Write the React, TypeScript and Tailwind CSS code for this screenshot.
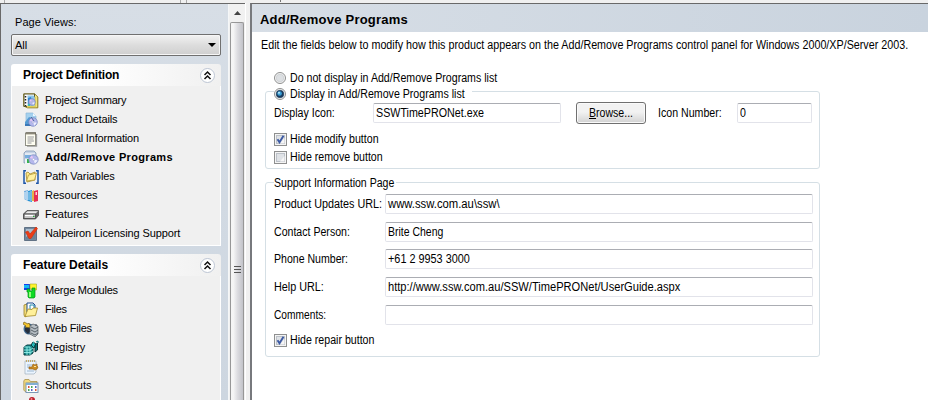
import React from "react";

const UI = "font-['Liberation_Sans',Arial,sans-serif]";

type IconProps = { children: React.ReactNode };
const Icon = ({ children }: IconProps) => (
  <svg width="16" height="16" viewBox="0 0 16 16" className="shrink-0">
    {children}
  </svg>
);

const Disc = ({ x, y, r = 4 }: { x: number; y: number; r?: number }) => (
  <g>
    <circle cx={x} cy={y} r={r} fill="#b5b8ec" stroke="#7484bd" strokeWidth="0.7" />
    <path d={`M${x} ${y}L${x - r * 0.8} ${y - r * 0.4}L${x - r * 0.3} ${y - r * 0.9}Z`} fill="#e6c6f5" />
    <path d={`M${x} ${y}L${x + r * 0.9} ${y + r * 0.2}L${x + r * 0.3} ${y + r * 0.9}Z`} fill="#edf0ff" />
    <circle cx={x} cy={y} r={r * 0.25} fill="#fff" stroke="#8a8ec8" strokeWidth="0.5" />
  </g>
);

const icons = {
  summary: (
    <Icon>
      <path d="M.8 1h11l3 3v10.800H4.500L.8 13z" fill="#f5e98e" stroke="#8c7a1c" />
      <rect x="1" y="1" width="10.500" height="12.500" fill="#fff" stroke="#5e5a28" />
      <path d="M2.500 3v10" stroke="#222" strokeWidth="1.500" strokeDasharray="1.500 1.500" />
      <path d="M4.500 2.500h6l1.500 2v8.500H4.500z" fill="#8cc4e8" />
      <path d="M5 5l3-1 1 5-4 2z" fill="#2a83d2" />
      <path d="M12.500 4v9.500H4" fill="none" stroke="#e3d15c" strokeWidth="1.500" />
      <Disc x={9} y={9} r={3.300} />
      <path d="M5 11h2v2H5z" fill="#3bb8b6" />
    </Icon>
  ),
  product: (
    <Icon>
      <path d="M3 1h7l3 3v9H3z" fill="#a5d1ee" stroke="#8eb8d8" strokeWidth=".7" />
      <path d="M10 1v3h3z" fill="#eff8ff" />
      <path d="M2 10l4-5 3 1-3 7H2z" fill="#559bd3" />
      <path d="M2 12h7v2H2z" fill="#3c78b7" />
      <Disc x={10} y={10} r={4.300} />
      <path d="M8 5l3 4" stroke="#48639a" />
    </Icon>
  ),
  general: (
    <Icon>
      <path d="M4 15h9.500V3" fill="none" stroke="#9b9b9b" strokeWidth="1.300" />
      <rect x="2.500" y="2" width="10" height="12.500" fill="#fffef2" stroke="#77776a" strokeWidth=".8" />
      <path d="M3.500 2.200h9" stroke="#4b4534" strokeWidth="2.500" strokeDasharray="1 1" />
      <path d="M4.500 6h6.500M4.500 8h6M4.500 10h6.500M4.500 12h4" stroke="#7b7d87" strokeWidth=".8" />
    </Icon>
  ),
  addremove: (
    <Icon>
      <path d="M1 3l2-2h8l2 2v10H1z" fill="#c7d4e5" stroke="#8499b5" strokeWidth=".8" />
      <path d="M2 4h10" stroke="#fff" />
      <rect x="2" y="5" width="6" height="3" fill="#76aee0" />
      <path d="M2 9h5v5H2z" fill="#eff4f7" />
      <rect x="4" y="9" width="2.500" height="4" fill="#35b34a" />
      <Disc x={10.500} y={9.500} r={4.700} />
    </Icon>
  ),
  path: (
    <Icon>
      <path d="M3 1.800H1v12.400h2M13 1.800h2v12.400h-2" fill="none" stroke="#1d55a8" strokeWidth="1.500" />
      <path d="M3 4l2-1 2 2 5-2v8l-8 2z" fill="#ffe98a" stroke="#a68b2d" strokeWidth=".8" />
      <path d="M3.500 12l2-6 8-2-2 7z" fill="#fff0a0" stroke="#b59838" strokeWidth=".8" />
    </Icon>
  ),
  resources: (
    <Icon>
      <path d="M1 3l4-1v11l-4-2z" fill="#77aede" />
      <path d="M2 4v7M4 3v9" stroke="#e9f6ff" />
      <path d="M5 3l4-1v12l-4-1z" fill="#2994d5" />
      <path d="M6 4v8M8 3v10" stroke="#d8effc" strokeWidth=".8" />
      <path d="M9 3l2-1v11H9z" fill="#e1b64b" />
      <path d="M11 3l4-1v11l-4 1z" fill="#e72d55" />
      <path d="M12.500 4h1.500v3h-1.500z" fill="#ffd7e1" />
    </Icon>
  ),
  features: (
    <Icon>
      <path d="M.5 7L4 3.500h11.500v5l-3 3.500H.5z" fill="#666" stroke="#444" strokeWidth=".7" />
      <path d="M2 6.500l2.500-2.300H15l-2.500 2.300z" fill="#ececec" />
      <rect x="1" y="7" width="11.500" height="4.500" fill="#c8c8c8" stroke="#454545" strokeWidth=".8" />
      <path d="M2 8.500h8" stroke="#fff" />
      <rect x="10" y="9" width="1.500" height="1" fill="#23ae35" />
    </Icon>
  ),
  nalpeiron: (
    <Icon>
      <path d="M1.500 1.500h12v13h-12z" fill="#71879d" stroke="#617285" />
      <path d="M3 3h9v10H3z" fill="#a9bccd" />
      <path d="M3 11l9-7v9H3z" fill="#6d8295" />
      <path d="M2.500 6L5 5l2 3L13 1l1.500 1.500L8 12.500H6z" fill="#ed3d16" stroke="#c9300e" strokeWidth=".6" />
    </Icon>
  ),
  merge: (
    <Icon>
      <rect x="1" y="1" width="6" height="6" fill="#1440e8" />
      <path d="M1 2h5v3H1z" fill="#13b9f5" />
      <path d="M7 1h6.500v6H9L7 5z" fill="#fff32d" stroke="#a6ab22" strokeWidth=".6" />
      <path d="M4 6h3v2h2V5h3v9l-1 1H6l-1-1V9H4z" fill="#0fda24" stroke="#079018" strokeWidth=".7" />
      <path d="M6 9h2v5H6z" fill="#90ff78" />
    </Icon>
  ),
  files: (
    <Icon>
      <path d="M1 3l3-1 1 2v9l-3 2L1 13z" fill="#f2dc7c" stroke="#9a8128" strokeWidth=".8" />
      <path d="M4 1h6l2 2v7H4z" fill="#fff" stroke="#1f4c8f" />
      <path d="M7 3h4v5H7z" fill="#fff" stroke="#248bad" />
      <path d="M2 14.500L5 7l4 .5 1-1.500h4.500l-2 7.500z" fill="#fff09a" stroke="#a58a28" strokeWidth=".8" />
    </Icon>
  ),
  web: (
    <Icon>
      <circle cx="6" cy="8" r="5.500" fill="#3f688e" />
      <path d="M2 7l4-2 2 4-3 4-3-3z" fill="#252f3e" />
      <path d="M1 1l4 2 1-1 2 5-6-1 1-1-3-2z" fill="#f6c72d" stroke="#79601c" strokeWidth=".7" />
      <path d="M7 5l3-2 5 2v8l-3 3-5-3z" fill="#b7bec4" stroke="#52595f" strokeWidth=".7" />
      <path d="M8 6l4 2 3-2M8 9l4 2 3-2M8 12l4 2 3-2" fill="none" stroke="#424c54" strokeWidth=".8" />
      <path d="M13 3v2" stroke="#36404e" />
    </Icon>
  ),
  registry: (
    <Icon>
      <path d="M1 7l3-2h6v8l-3 2H1z" fill="#168b8d" stroke="#073f43" />
      <path d="M1 7h6v8M4 7v8M1 10h6M1 12.500h6M7 10l3-2M7 13l3-2" fill="none" stroke="#94eee8" strokeWidth=".9" />
      <path d="M8 5l2-3 3 2-2 4z" fill="#24b6b7" stroke="#063d40" />
      <path d="M12 5l2.500-2v7L12 12z" fill="#087478" stroke="#052e31" />
      <path d="M13 2l2-1v2" fill="none" stroke="#087478" />
      <path d="M10 2h1" stroke="#63efec" />
    </Icon>
  ),
  ini: (
    <Icon>
      <path d="M2 2h11v11l-2 2H2z" fill="#eaf4ff" stroke="#a1afbb" strokeWidth=".7" />
      <path d="M3 2h9" stroke="#c2a968" strokeWidth="2" strokeDasharray="1 1" />
      <path d="M4 6h5M4 8h3M4 12h7" stroke="#9cb6ce" />
      <path d="M6 8h3l1-3 2 1 2-1v2l1 1-1 2-2 1-2-1H6z" fill="#c98b22" stroke="#986117" strokeWidth=".7" />
      <path d="M11 7h2v1h-2z" fill="#ffe6a2" />
    </Icon>
  ),
  shortcuts: (
    <Icon>
      <path d="M.8 3l1-1.500H6l1.500 2H14v10H2L.8 12z" fill="#f2d97c" stroke="#aa914d" strokeWidth=".8" />
      <rect x="3" y="5" width="12" height="9.500" fill="#fff" stroke="#6e8dad" strokeWidth=".9" />
      <path d="M3 5h12v2H3z" fill="#82aed3" />
      <path d="M5 8h1.500v2H5zM12 11h1.500v2H12z" fill="#df5338" />
      <path d="M8 8h1.500v2H8zM5 11h1.500v2H5z" fill="#4aa957" />
      <path d="M12 8h1.500v2H12zM8 11h1.500v2H8z" fill="#5565c3" />
    </Icon>
  ),
  last: (
    <Icon>
      <circle cx="9" cy="3" r="3" fill="#bd1e2b" />
      <circle cx="8.500" cy="2" r="1" fill="#f28b8d" />
      <path d="M5 5l2-1 2 3-3 1z" fill="#2c2430" />
    </Icon>
  ),
};

const Chevron = () => (
  <svg width="15" height="15" viewBox="0 0 15 15" className="shrink-0">
    <circle cx="7.500" cy="7.500" r="7" fill="#fff" stroke="#bcc5d3" />
    <path d="M4.500 7L7.500 4l3 3M4.500 11l3-3 3 3" fill="none" stroke="#111" strokeWidth="1.500" />
  </svg>
);

type Item = { icon: React.ReactNode; label: string; cls: string };

const Group = ({ title, titleCls, items, cls }: { title: string; titleCls: string; items: Item[]; cls: string }) => (
  <section className={`ml-[10px] w-[210px] shrink-0 ${cls}`}>
    <header className="flex h-[22px] items-center justify-between rounded-t-[3px] bg-gradient-to-r from-white from-40% to-[#f0f0f0] pr-[6px] pl-[12px]">
      <h2 className={`text-[12px] leading-[14px] font-bold whitespace-nowrap ${titleCls}`}>{title}</h2>
      <Chevron />
    </header>
    <ul className="border-x border-b border-white bg-[#f0f0f0] pt-[5px] pb-[2px] pl-[11px]">
      {items.map((it, i) => (
        <li key={i} className="flex h-[19px] items-center gap-[6px] text-[11px] leading-[13px] whitespace-nowrap">
          {it.icon}
          <span className={it.cls}>{it.label}</span>
        </li>
      ))}
    </ul>
  </section>
);

const project: Item[] = [
  { icon: icons.summary, label: "Project Summary", cls: "tracking-[-0.2px]" },
  { icon: icons.product, label: "Product Details", cls: "tracking-[-0.15px]" },
  { icon: icons.general, label: "General Information", cls: "tracking-[-0.17px]" },
  { icon: icons.addremove, label: "Add/Remove Programs", cls: "font-bold tracking-[0.33px]" },
  { icon: icons.path, label: "Path Variables", cls: "tracking-[-0.07px]" },
  { icon: icons.resources, label: "Resources", cls: "" },
  { icon: icons.features, label: "Features", cls: "" },
  { icon: icons.nalpeiron, label: "Nalpeiron Licensing Support", cls: "tracking-[-0.11px]" },
];

const feature: Item[] = [
  { icon: icons.merge, label: "Merge Modules", cls: "tracking-[-0.23px]" },
  { icon: icons.files, label: "Files", cls: "tracking-[-0.3px]" },
  { icon: icons.web, label: "Web Files", cls: "tracking-[-0.2px]" },
  { icon: icons.registry, label: "Registry", cls: "" },
  { icon: icons.ini, label: "INI Files", cls: "tracking-[-0.4px]" },
  { icon: icons.shortcuts, label: "Shortcuts", cls: "" },
  { icon: icons.last, label: "", cls: "" },
];

/* Form text is set condensed: full cap height, narrow letters. */
const Narrow = ({ cls = "scale-x-[0.885]", children }: { cls?: string; children: React.ReactNode }) => (
  <span className={`inline-block origin-left ${cls}`}>{children}</span>
);

const Radio = ({ on }: { on?: boolean }) => (
  <svg width="12" height="12" viewBox="0 0 12 12" className="shrink-0">
    <circle cx="6" cy="6" r="5.500" fill="#f4f4f4" stroke="#8e8f8f" />
    <circle cx="6" cy="6" r="3.800" fill={on ? "#1a3a5c" : "#dcdfe2"} stroke={on ? "#1a3a5c" : "#c2c6ca"} strokeWidth=".6" />
    {on && <circle cx="5.600" cy="5.500" r="2.300" fill="#3aa0d8" />}
    {on && <circle cx="5" cy="4.800" r="1" fill="#b9e9fb" />}
  </svg>
);

const Check = ({ on, label }: { on?: boolean; label: string }) => (
  <label className="flex h-[18px] items-center gap-[3px]">
    <svg width="13" height="13" viewBox="0 0 13 13" className="shrink-0">
      <rect x=".5" y=".5" width="12" height="12" fill="#f4f4f4" stroke="#8e8f8f" />
      <rect x="2.500" y="2.500" width="8" height="8" fill="#dfe2e6" stroke="#bcc1c8" />
      <path d="M6 10.500h4.500V5z" fill="#f6f6f6" />
      {on && <path d="M3.500 6.200L5.500 9.300L9.500 2.700" fill="none" stroke="#3d5aa3" strokeWidth="1.900" />}
    </svg>
    <Narrow>{label}</Narrow>
  </label>
);

const Field = ({ value, cls, textCls }: { value: string; cls: string; textCls?: string }) => (
  <div className={`flex h-[20px] shrink-0 items-center rounded-[2px] border border-[#e2e3ea] border-t-[#abadb3] bg-white pl-[2px] ${cls}`}>
    <Narrow cls={textCls}>{value}</Narrow>
  </div>
);

const support = [
  { label: "Product Updates URL:", lc: "scale-x-[0.9]", value: "www.ssw.com.au\\ssw\\", vc: "scale-x-[0.94]", row: "mb-[8px]" },
  { label: "Contact Person:", lc: "scale-x-[0.882]", value: "Brite Cheng", vc: "scale-x-[0.873]", row: "mb-[7px]" },
  { label: "Phone Number:", lc: "scale-x-[0.88]", value: "+61 2 9953 3000", vc: "scale-x-[0.905]", row: "mb-[8px]" },
  { label: "Help URL:", lc: "scale-x-[0.9]", value: "http://www.ssw.com.au/SSW/TimePRONet/UserGuide.aspx", vc: "scale-x-[0.926]", row: "mb-[8px]" },
  { label: "Comments:", lc: "scale-x-[0.85]", value: "", vc: "", row: "mb-[6px]" },
];

export default function App() {
  return (
    <div className={`flex h-[400px] w-[928px] flex-col overflow-hidden bg-[#f0f0f0] text-black ${UI}`}>
      <div className="flex h-[3px] shrink-0">
        <div className="w-[5px] border-r border-[#aaa]" />
        <div className="w-[176px] border-r border-[#aaa]" />
        <div className="w-[6px] border-r border-[#aaa]" />
        <div className="h-[2px] w-[94px] border-r border-[#777]" />
      </div>
      <div className="flex min-h-0 flex-1">
        <aside className="flex w-[245px] shrink-0 border-t border-l border-[#696969]">
          <div className="flex w-[228px] shrink-0 flex-col overflow-hidden border-r border-[#f5f7f8] bg-gradient-to-b from-[#d7dee6] to-[#cdd6e0]">
            <div className="mt-[10px] ml-[14px] h-[14px] leading-[14px]"><span className="text-[11px] tracking-[0.06px]">Page Views:</span></div>
            <div className="mt-[6px] ml-[10px] flex h-[22px] w-[210px] shrink-0 items-center justify-between rounded-[2px] border border-[#707070] bg-gradient-to-b from-[#f2f2f2] from-0% via-[#dddddd] via-50% to-[#cfcfcf] pr-[4px] pl-[3px] shadow-[inset_0_0_0_1px_#f6f6f6]">
              <span className="text-[11px]">All</span>
              <svg width="8" height="4" viewBox="0 0 8 4"><path d="M0 0h8L4 4z" fill="#000" /></svg>
            </div>
            <Group title="Project Definition" titleCls="tracking-[-0.17px]" items={project} cls="mt-[8px]" />
            <Group title="Feature Details" titleCls="tracking-[-0.07px]" items={feature} cls="mt-[8px]" />
          </div>
          <div className="flex flex-1 flex-col bg-[#f1f1f1]">
            <div className="flex h-[18px] items-center justify-center">
              <svg width="7" height="4" viewBox="0 0 7 4"><path d="M0 4h7L3.500 0z" fill="#444" /></svg>
            </div>
            <div className="mx-px flex flex-1 flex-col items-center rounded-t-[2px] border border-b-0 border-[#979797] bg-gradient-to-r from-[#f5f5f5] from-20% via-[#dcdce0] via-55% to-[#c2c3c9] pt-[243px]">
              <div className="flex flex-col gap-[2px]">
                <div className="h-px w-[7px] bg-[#555]" />
                <div className="h-px w-[7px] bg-[#555]" />
                <div className="h-px w-[7px] bg-[#555]" />
              </div>
            </div>
          </div>
        </aside>
        <div className="w-[5px] shrink-0 border-l border-white bg-[#f0f0f0]" />
        <main className="flex min-w-0 flex-1 flex-col border-t border-l-2 border-t-[#696969] border-l-[#77797d] bg-white text-[12px] leading-[14px] whitespace-nowrap">
          <div className="flex h-[28px] shrink-0 items-center bg-gradient-to-r from-[#d7dee6] to-[#c9d3de] pl-[8px]">
            <h1 className="pt-[3px] text-[13px] font-bold tracking-[0.22px]">Add/Remove Programs</h1>
          </div>
          <p className="mt-[6px] ml-[9px] h-[14px]">
            <Narrow cls="scale-x-[0.895]">Edit the fields below to modify how this product appears on the Add/Remove Programs control panel for Windows 2000/XP/Server 2003.</Narrow>
          </p>
          <label className="mt-[18px] ml-[22px] flex h-[16px] items-center gap-[4px]">
            <Radio />
            <Narrow>Do not display in Add/Remove Programs list</Narrow>
          </label>
          <section className="mt-[5px] ml-[13px] h-[78px] w-[555px] shrink-0 rounded-[3px] border border-[#d5dfe5] pl-[8px]">
            <label className="-mt-[6px] flex h-[16px] w-[198px] items-center gap-[4px] bg-white">
              <Radio on />
              <Narrow>Display in Add/Remove Programs list</Narrow>
            </label>
            <div className="flex h-[22px] items-center">
              <div className="w-[99px]"><Narrow>Display Icon:</Narrow></div>
              <Field value="SSWTimePRONet.exe" cls="w-[188px]" textCls="scale-x-[0.893]" />
              <button className="ml-[15px] h-[22px] w-[70px] rounded-[3px] border border-[#707070] bg-gradient-to-b from-[#f2f2f2] from-45% to-[#d2d2d2] shadow-[inset_0_0_0_1px_#fafafa]">
                <span className="inline-block scale-x-[0.88]"><span className="underline">B</span>rowse...</span>
              </button>
              <div className="ml-[12px] w-[79px]"><Narrow>Icon Number:</Narrow></div>
              <Field value="0" cls="w-[75px]" />
            </div>
            <div className="mt-[6px]">
              <Check on label="Hide modify button" />
              <Check label="Hide remove button" />
            </div>
          </section>
          <section className="mt-[13px] ml-[13px] h-[175px] w-[555px] shrink-0 rounded-[3px] border border-[#d5dfe5] pl-[8px]">
            <div className="-mt-[7px] mb-[4px] h-[14px] w-[122px] bg-white"><Narrow cls="scale-x-[0.88]">Support Information Page</Narrow></div>
            {support.map((s) => (
              <div key={s.label} className={`flex h-[20px] items-center ${s.row}`}>
                <div className="w-[111px] shrink-0"><Narrow cls={s.lc}>{s.label}</Narrow></div>
                <Field value={s.value} cls="w-[428px]" textCls={s.vc} />
              </div>
            ))}
            <Check on label="Hide repair button" />
          </section>
        </main>
      </div>
    </div>
  );
}
